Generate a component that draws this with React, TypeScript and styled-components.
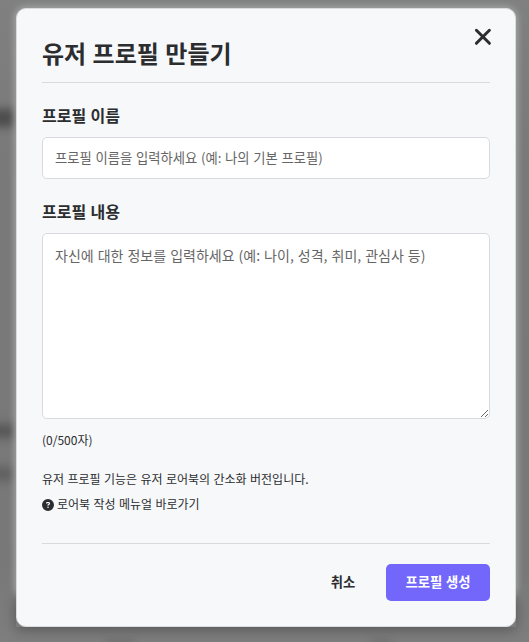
import React from "react";
import styled, { createGlobalStyle } from "styled-components";

const GlobalStyle = createGlobalStyle`
  * { box-sizing: border-box; }
  html, body, #root { height: 100%; }
  body {
    margin: 0;
    overflow: hidden;
    background: #7c7c7c;
    color: #2b2d2f;
    font-family: "Noto Sans CJK KR", "Noto Sans", sans-serif;
  }
  button, input, textarea { font-family: inherit; }
`;

const Overlay = styled.div`
  position: relative;
  height: 642px;
  width: 529px;
  padding: 8px 13px 15px 16px;
  overflow: hidden;
  background: linear-gradient(#808080, #797979 25%, #787878 88%, #7e7e7e);
`;

const Smudge = styled.span<{ $x: number; $y: number; $w: number; $h: number; $a: number }>`
  position: absolute;
  left: ${(p) => p.$x}px;
  top: ${(p) => p.$y}px;
  width: ${(p) => p.$w}px;
  height: ${(p) => p.$h}px;
  background: rgba(0, 0, 0, ${(p) => p.$a});
  filter: blur(5px);
`;

const Glow = styled.span`
  position: absolute;
  left: 16px;
  top: 8px;
  width: 500px;
  height: 589px;
  border-radius: 10px;
  background: #a9adab;
  box-shadow: 0 0 7px 1px #a9adab;
`;

const Shade = styled.span`
  position: absolute;
  left: 16px;
  top: 597px;
  width: 500px;
  height: 30px;
  box-shadow: 0 3px 13px rgba(0, 0, 0, 0.3);
`;

const Modal = styled.section`
  position: relative;
  display: flex;
  flex-direction: column;
  width: 500px;
  height: 619px;
  padding: 24px 25px 25px;
  border: 1px solid #d9dbdd;
  border-radius: 10px;
  background: #f7f8fa;
`;

const Header = styled.header`
  height: 50px;
  border-bottom: 1px solid #d8dadd;
`;

const Title = styled.h2`
  margin: 0;
  font-size: 24px;
  font-weight: 700;
  line-height: 40px;
  word-spacing: 1px;
`;

const CloseButton = styled.button`
  position: absolute;
  top: 16px;
  right: 20px;
  display: flex;
  padding: 0;
  border: 0;
  background: none;
  color: #2b2d2f;
`;

const Label = styled.label`
  margin-top: 20px;
  margin-bottom: 10px;
  font-size: 16px;
  font-weight: 700;
  line-height: 24px;
  word-spacing: 0.8px;
`;

const Input = styled.input`
  width: 100%;
  height: 42px;
  padding: 0 12px 2px;
  border: 1px solid #d8dadd;
  border-radius: 5px;
  background: #fff;
  font-size: 13.333px;
  word-spacing: 0.7px;
  &::placeholder { color: #666; opacity: 1; }
`;

const TextArea = styled.textarea`
  display: block;
  width: 100%;
  height: 186px;
  padding: 11px 12px;
  border: 1px solid #d8dadd;
  border-radius: 5px;
  background: #fff;
  font-size: 14px;
  line-height: 21px;
  word-spacing: 0.9px;
  resize: vertical;
  &::placeholder { color: #666; opacity: 1; }
`;

const Counter = styled.div`
  margin-top: 12px;
  font-size: 12px;
  line-height: 18px;
`;

const Notes = styled.div`
  margin-top: 17px;
  font-size: 12px;
  line-height: 25px;
  word-spacing: 0.7px;
`;

const ManualLink = styled.a`
  display: flex;
  align-items: center;
  gap: 3px;
  color: inherit;
  svg { position: relative; top: 1px; }
`;

const Footer = styled.footer`
  display: flex;
  justify-content: flex-end;
  gap: 10px;
  margin-top: auto;
  padding-top: 20px;
  border-top: 1px solid #d8dadd;
`;

const Button = styled.button<{ $primary?: boolean }>`
  height: 37px;
  width: ${(p) => (p.$primary ? 104 : 66)}px;
  padding: 0 0 3px;
  border: 0;
  border-radius: 5px;
  background: ${(p) => (p.$primary ? "#7367fb" : "transparent")};
  color: ${(p) => (p.$primary ? "#fff" : "#2b2d2f")};
  font-size: 13.333px;
  font-weight: 700;
  word-spacing: 0.7px;
`;

export default function App() {
  return (
    <>
      <GlobalStyle />
      <Overlay>
        <Smudge $x={-10} $y={109} $w={26} $h={18} $a={0.38} />
        <Smudge $x={-10} $y={424} $w={26} $h={14} $a={0.28} />
        <Smudge $x={-10} $y={467} $w={24} $h={14} $a={0.2} />
        <Glow />
        <Shade />
        <Smudge $x={105} $y={641} $w={30} $h={8} $a={0.15} />
        <Smudge $x={370} $y={641} $w={22} $h={8} $a={0.15} />
        <Modal role="dialog">
          <CloseButton aria-label="닫기">
            <svg width="24" height="24" viewBox="0 0 24 24" fill="none" stroke="currentColor" strokeWidth="3" strokeLinecap="round">
              <path d="M5.4 5.3 18.4 18.3M18.4 5.3 5.4 18.3" />
            </svg>
          </CloseButton>
          <Header>
            <Title>유저 프로필 만들기</Title>
          </Header>
          <Label htmlFor="name">프로필 이름</Label>
          <Input id="name" placeholder="프로필 이름을 입력하세요 (예: 나의 기본 프로필)" />
          <Label htmlFor="content">프로필 내용</Label>
          <TextArea id="content" placeholder="자신에 대한 정보를 입력하세요 (예: 나이, 성격, 취미, 관심사 등)" />
          <Counter>(0/500자)</Counter>
          <Notes>
            <div>유저 프로필 기능은 유저 로어북의 간소화 버전입니다.</div>
            <ManualLink>
              <svg width="12" height="12" viewBox="0 0 512 512" fill="currentColor">
                <path d="M256 512A256 256 0 1 0 256 0a256 256 0 1 0 0 512zM169.800 165.300c7.900-22.300 29.100-37.300 52.800-37.300h58.300c34.900 0 63.100 28.300 63.100 63.100c0 22.600-12.100 43.500-31.700 54.800L280 264.400c-.2 13-10.900 23.600-24 23.600c-13.300 0-24-10.700-24-24V250.500c0-8.600 4.600-16.500 12.100-20.800l44.300-25.400c4.700-2.700 7.600-7.700 7.600-13.100c0-8.400-6.800-15.100-15.100-15.100H222.600c-3.400 0-6.400 2.100-7.500 5.300l-.4 1.200c-4.400 12.500-18.200 19-30.600 14.600s-19-18.200-14.600-30.600l.3-1.300zM224 352a32 32 0 1 1 64 0 32 32 0 1 1-64 0z" />
              </svg>
              로어북 작성 메뉴얼 바로가기
            </ManualLink>
          </Notes>
          <Footer>
            <Button>취소</Button>
            <Button $primary>프로필 생성</Button>
          </Footer>
        </Modal>
      </Overlay>
    </>
  );
}
